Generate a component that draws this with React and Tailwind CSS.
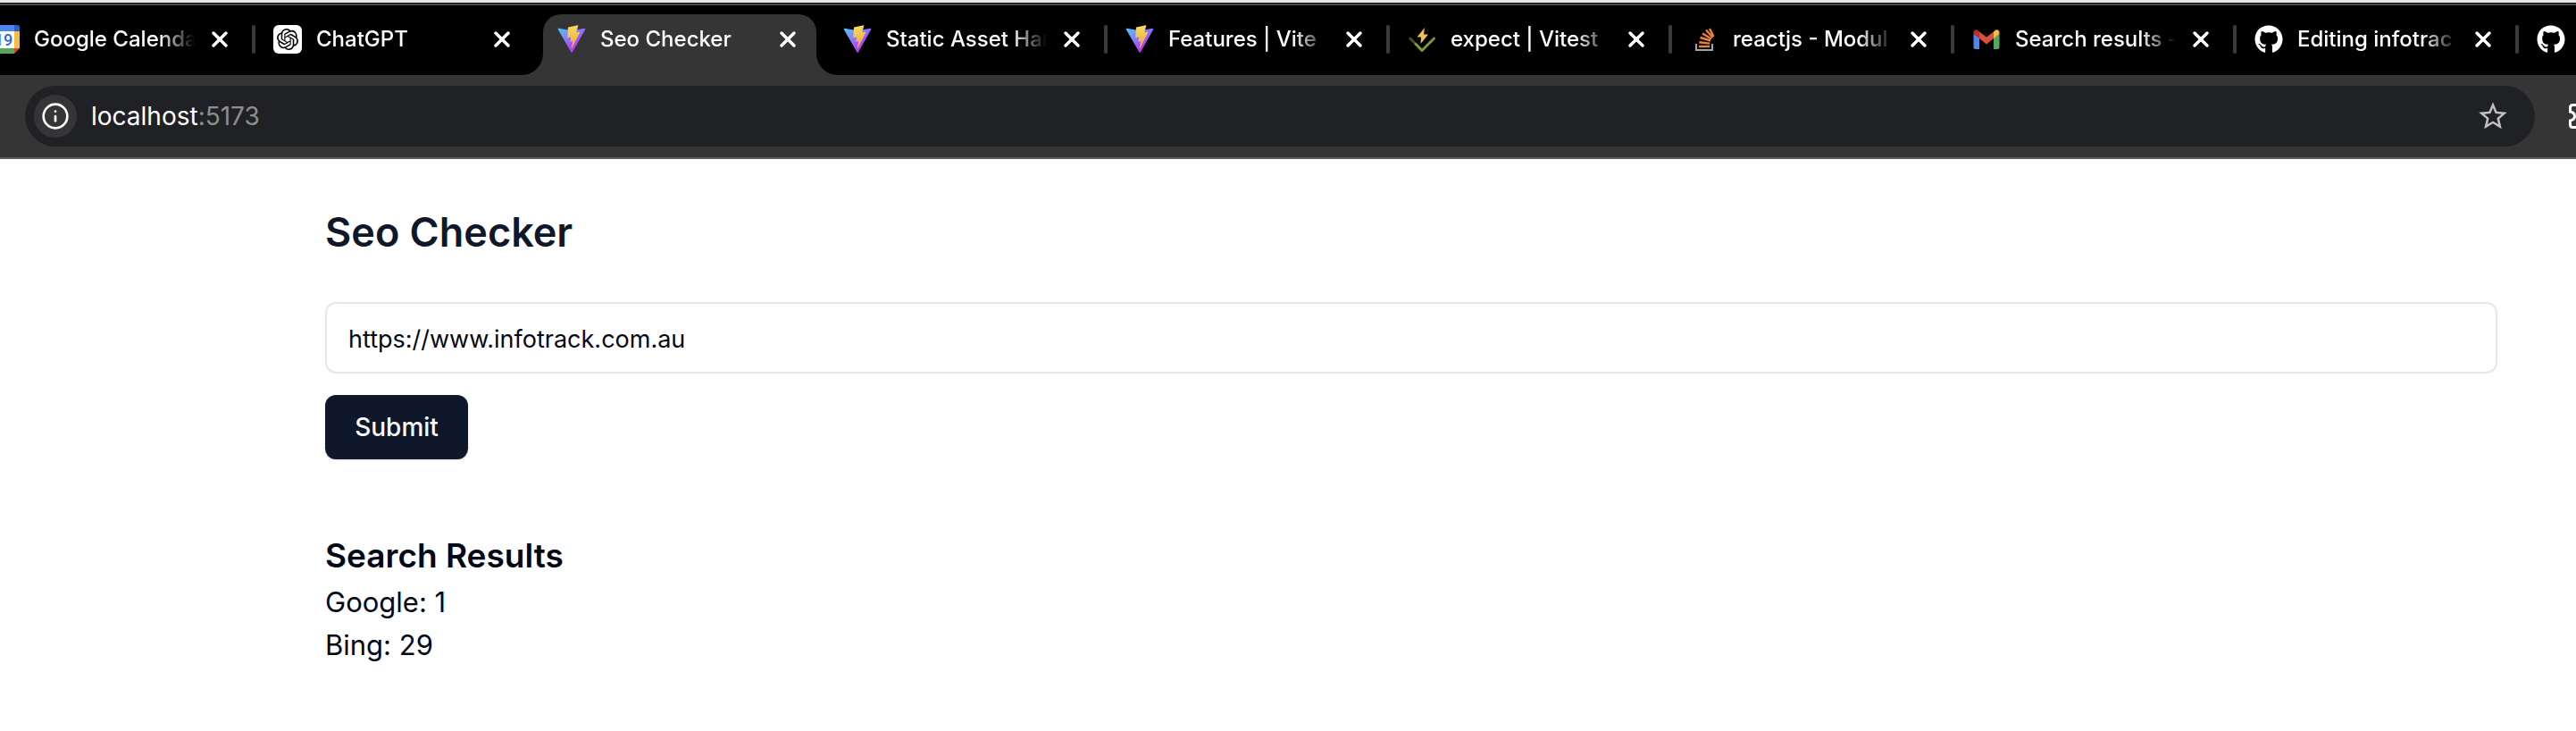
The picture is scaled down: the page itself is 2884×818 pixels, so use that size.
import React from "react";
import { X, Info } from "lucide-react";
import { SiOpenai } from "react-icons/si";
import { FaGithub } from "react-icons/fa";
import { MdStarBorder } from "react-icons/md";

function CalendarIcon() {
  return (
    <svg viewBox="0 0 32 32" className="size-8" aria-hidden="true">
      <path d="M4 0h22v7H0V4a4 4 0 0 1 4-4z" fill="#4b86ee" />
      <path d="M26 0h3a3 3 0 0 1 3 3v4h-6z" fill="#2462d2" />
      <path d="M0 7h26v19H0z" fill="#fff" />
      <path d="M26 7h6v19h-6z" fill="#f5bc45" />
      <path d="M0 26h26v6H3a3 3 0 0 1-3-3z" fill="#58a65c" />
      <path d="M26 26h6l-6 6z" fill="#db4437" />
      <text x="14" y="22.500" textAnchor="middle" fontSize="18" fontFamily="Roboto, sans-serif" fontWeight="500" fill="#2a6ae0">19</text>
    </svg>
  );
}

function ChatGptIcon() {
  return (
    <span className="flex size-8 items-center justify-center rounded-md bg-white text-black">
      <SiOpenai className="size-6" aria-hidden="true" />
    </span>
  );
}

function ViteIcon({ id }) {
  return (
    <svg viewBox="0 0 410 404" className="size-8" aria-hidden="true">
      <defs>
        <linearGradient id={`${id}-a`} x1="6" y1="33" x2="235" y2="344" gradientUnits="userSpaceOnUse">
          <stop stopColor="#41D1FF" />
          <stop offset="1" stopColor="#BD34FE" />
        </linearGradient>
        <linearGradient id={`${id}-b`} x1="194.651" y1="8.818" x2="236.076" y2="292.989" gradientUnits="userSpaceOnUse">
          <stop stopColor="#f9dc5c" />
          <stop offset="1" stopColor="#f2a93b" />
        </linearGradient>
      </defs>
      <path d="M399.641 59.525L215.643 388.545C211.844 395.338 202.084 395.378 198.228 388.618L10.582 59.556C6.381 52.19 12.68 43.267 21.028 44.759L205.223 77.682C206.398 77.892 207.601 77.89 208.776 77.676L389.119 44.806C397.439 43.289 403.768 52.143 399.641 59.525Z" fill={`url(#${id}-a)`} />
      <path d="M292.965 1.574L156.801 28.255C154.563 28.694 152.906 30.59 152.771 32.866L144.395 174.33C144.198 177.662 147.258 180.248 150.51 179.498L188.42 170.749C191.967 169.931 195.172 173.055 194.443 176.622L183.18 231.775C182.422 235.487 185.907 238.661 189.532 237.56L212.947 230.446C216.577 229.344 220.065 232.527 219.297 236.242L201.398 322.875C200.278 328.294 207.486 331.249 210.492 326.603L212.5 323.5L323.454 102.072C325.312 98.365 322.108 94.137 318.036 94.923L279.014 102.454C275.347 103.161 272.227 99.746 273.262 96.158L298.731 7.867C299.767 4.273 296.636 0.855 292.965 1.574Z" fill={`url(#${id}-b)`} />
    </svg>
  );
}

function VitestIcon() {
  return (
    <svg viewBox="0 0 32 32" className="size-8" aria-hidden="true">
      <path d="M2.800 15 16 28.500" stroke="#44541f" strokeWidth="2.800" strokeLinecap="round" />
      <path d="M9 21.300 16 28.500 29.500 15" fill="none" stroke="#7a9f35" strokeWidth="2.800" strokeLinecap="round" strokeLinejoin="round" />
      <path d="M19 3 10.500 13.500h4.500L14.500 21l8.500-10.500h-5z" fill="#f3c04b" />
    </svg>
  );
}

function StackOverflowIcon() {
  return (
    <svg viewBox="0 0 32 32" className="size-8" aria-hidden="true">
      <path d="M7 21v7h18v-7" fill="none" stroke="#9fa6ad" strokeWidth="2" />
      <path d="M10 24h12M10.300 19.300l12 1.300M11.500 14l11.500 3.500M14 9.500l10 6M18 5.500l7.500 8.500M22 4l4.500 9" stroke="#e5823c" strokeWidth="2.400" fill="none" />
    </svg>
  );
}

function GmailIcon() {
  return (
    <svg viewBox="0 0 32 32" className="size-8" aria-hidden="true">
      <path d="M1.500 10v15a2 2 0 0 0 2 2H8V14z" fill="#4f86ee" />
      <path d="M30.500 10v15a2 2 0 0 1-2 2H24V14z" fill="#58a65c" />
      <path d="M8 7.500 16 13.500l8-6V15l-8 6.500L8 15z" fill="#dd4b3e" />
      <path d="M1.500 8.500C1.500 5 5 3.800 8 7.500V15l-6.500-5z" fill="#b5312a" />
      <path d="M30.500 8.500c0-3.500-3.500-4.700-6.500-1V15l6.500-5z" fill="#f5bc45" />
    </svg>
  );
}

function GithubIcon() {
  return <FaGithub className="size-8 text-white" aria-hidden="true" />;
}

function PuzzleIcon() {
  return (
    <svg viewBox="0 0 32 28" className="h-7 w-8" fill="none" stroke="currentColor" strokeWidth="3" aria-hidden="true">
      <path d="M9 1.500H4.500q-3 0-3 3V9q5 1 5 5t-5 5v4.500q0 3 3 3H22q3 0 3-3V19q5.500 0 5.500-5T25 9V4.500q0-3-3-3z" />
    </svg>
  );
}

const before = [
  { title: "Google Calenda", icon: <CalendarIcon /> },
  { title: "ChatGPT", icon: <ChatGptIcon />, last: true },
];

const after = [
  { title: "Static Asset Han", icon: <ViteIcon id="static" /> },
  { title: "Features | Vite", icon: <ViteIcon id="features" /> },
  { title: "expect | Vitest", icon: <VitestIcon /> },
  { title: "reactjs - Modul", icon: <StackOverflowIcon /> },
  { title: "Search results -", icon: <GmailIcon /> },
  { title: "Editing infotrac", icon: <GithubIcon /> },
];

function TabTitle({ children }) {
  return (
    <span className="ml-4 min-w-0 flex-1 overflow-hidden whitespace-nowrap [mask-image:linear-gradient(to_right,black_calc(100%-40px),transparent)]">
      {children}
    </span>
  );
}

function CloseButton({ title }) {
  return (
    <button type="button" aria-label={`Close ${title}`} className="ml-3 flex size-8 shrink-0 items-center justify-center">
      <X className="size-7" strokeWidth={3} />
    </button>
  );
}

function Tab({ title, icon, last }) {
  return (
    <div className="flex h-full w-[316px] shrink-0 items-center pl-5">
      <span className="shrink-0">{icon}</span>
      <TabTitle>{title}</TabTitle>
      <CloseButton title={title} />
      <span className={last ? "ml-5 h-8 w-1" : "ml-5 h-8 w-1 rounded-full bg-[#3b3b3b]"} />
    </div>
  );
}

function ActiveTab() {
  return (
    <div className="-ml-[18px] flex h-full shrink-0 items-end">
      <svg viewBox="0 0 24 24" className="size-6 shrink-0" aria-hidden="true">
        <path d="M24 0A24 24 0 0 1 0 24h24z" fill="#353535" />
      </svg>
      <div className="flex h-[68px] w-[306px] items-center rounded-t-[20px] bg-[#353535] px-4 pb-3">
        <ViteIcon id="active" />
        <TabTitle>Seo Checker</TabTitle>
        <CloseButton title="Seo Checker" />
      </div>
      <svg viewBox="0 0 24 24" className="-mr-[14px] size-6 shrink-0" aria-hidden="true">
        <path d="M0 0a24 24 0 0 0 24 24H0z" fill="#353535" />
      </svg>
    </div>
  );
}

export default function App() {
  return (
    <div className="min-h-screen overflow-x-hidden bg-white font-['Inter',sans-serif]">
      <header>
        <div className="h-[3px] bg-[#e8e5e1]" />
        <div className="h-[3px] border-t border-black bg-[#4b4b4b]" />
        <nav aria-label="Tabs" className="flex h-[78px] overflow-hidden bg-black text-2xl font-medium text-white">
          <div className="-ml-[30px] flex h-full shrink-0 pb-0.5">
            {before.map((tab) => (
              <Tab key={tab.title} {...tab} />
            ))}
          </div>
          <ActiveTab />
          <div className="flex h-full pb-0.5">
            {after.map((tab) => (
              <Tab key={tab.title} {...tab} />
            ))}
            <button type="button" aria-label="GitHub" className="ml-5 shrink-0">
              <GithubIcon />
            </button>
          </div>
        </nav>
        <div className="flex items-center gap-[38px] overflow-hidden border-b-2 border-[#5f5f5f] bg-[#353535] py-3 pl-7">
          <div className="flex h-[68px] min-w-0 flex-1 items-center rounded-full bg-[#202124] pr-7 pl-[10px]">
            <button type="button" aria-label="Site information" className="flex size-12 items-center justify-center rounded-full bg-[#353535] text-white">
              <Info className="size-8" />
            </button>
            <p className="ml-4 flex-1 text-[28px] leading-9 text-white">
              localhost<span className="text-[#8e8e8e]">:5173</span>
            </p>
            <button type="button" aria-label="Bookmark this page" className="text-[#c0c0c0]">
              <MdStarBorder className="size-[38px]" />
            </button>
          </div>
          <button type="button" aria-label="Extensions" className="-mr-6 shrink-0 text-white">
            <PuzzleIcon />
          </button>
        </div>
      </header>

      <main className="pt-[50px] pr-[88px] pl-[364px] text-[#020817]">
        <h1 className="text-[45px] leading-[64px] font-semibold text-[#0f172a]">Seo Checker</h1>
        <form className="mt-[46px] flex flex-col items-start gap-6" onSubmit={(e) => e.preventDefault()}>
          <input
            type="text"
            aria-label="Website address"
            defaultValue="https://www.infotrack.com.au"
            className="h-20 w-full rounded-xl border-2 border-[#e2e8f0] bg-white px-6 pt-0.5 text-[27px] leading-10 outline-none"
          />
          <button type="submit" className="h-[72px] w-40 rounded-xl bg-[#0f172a] text-[28px] leading-10 font-medium text-[#f8fafc] shadow">
            Submit
          </button>
        </form>
        <section className="mt-20 pb-14">
          <h2 className="text-[37px] leading-[56px] font-semibold">Search Results</h2>
          <p className="text-[31px] leading-[48px]">Google: 1</p>
          <p className="text-[31px] leading-[48px]">Bing: 29</p>
        </section>
      </main>
    </div>
  );
}
